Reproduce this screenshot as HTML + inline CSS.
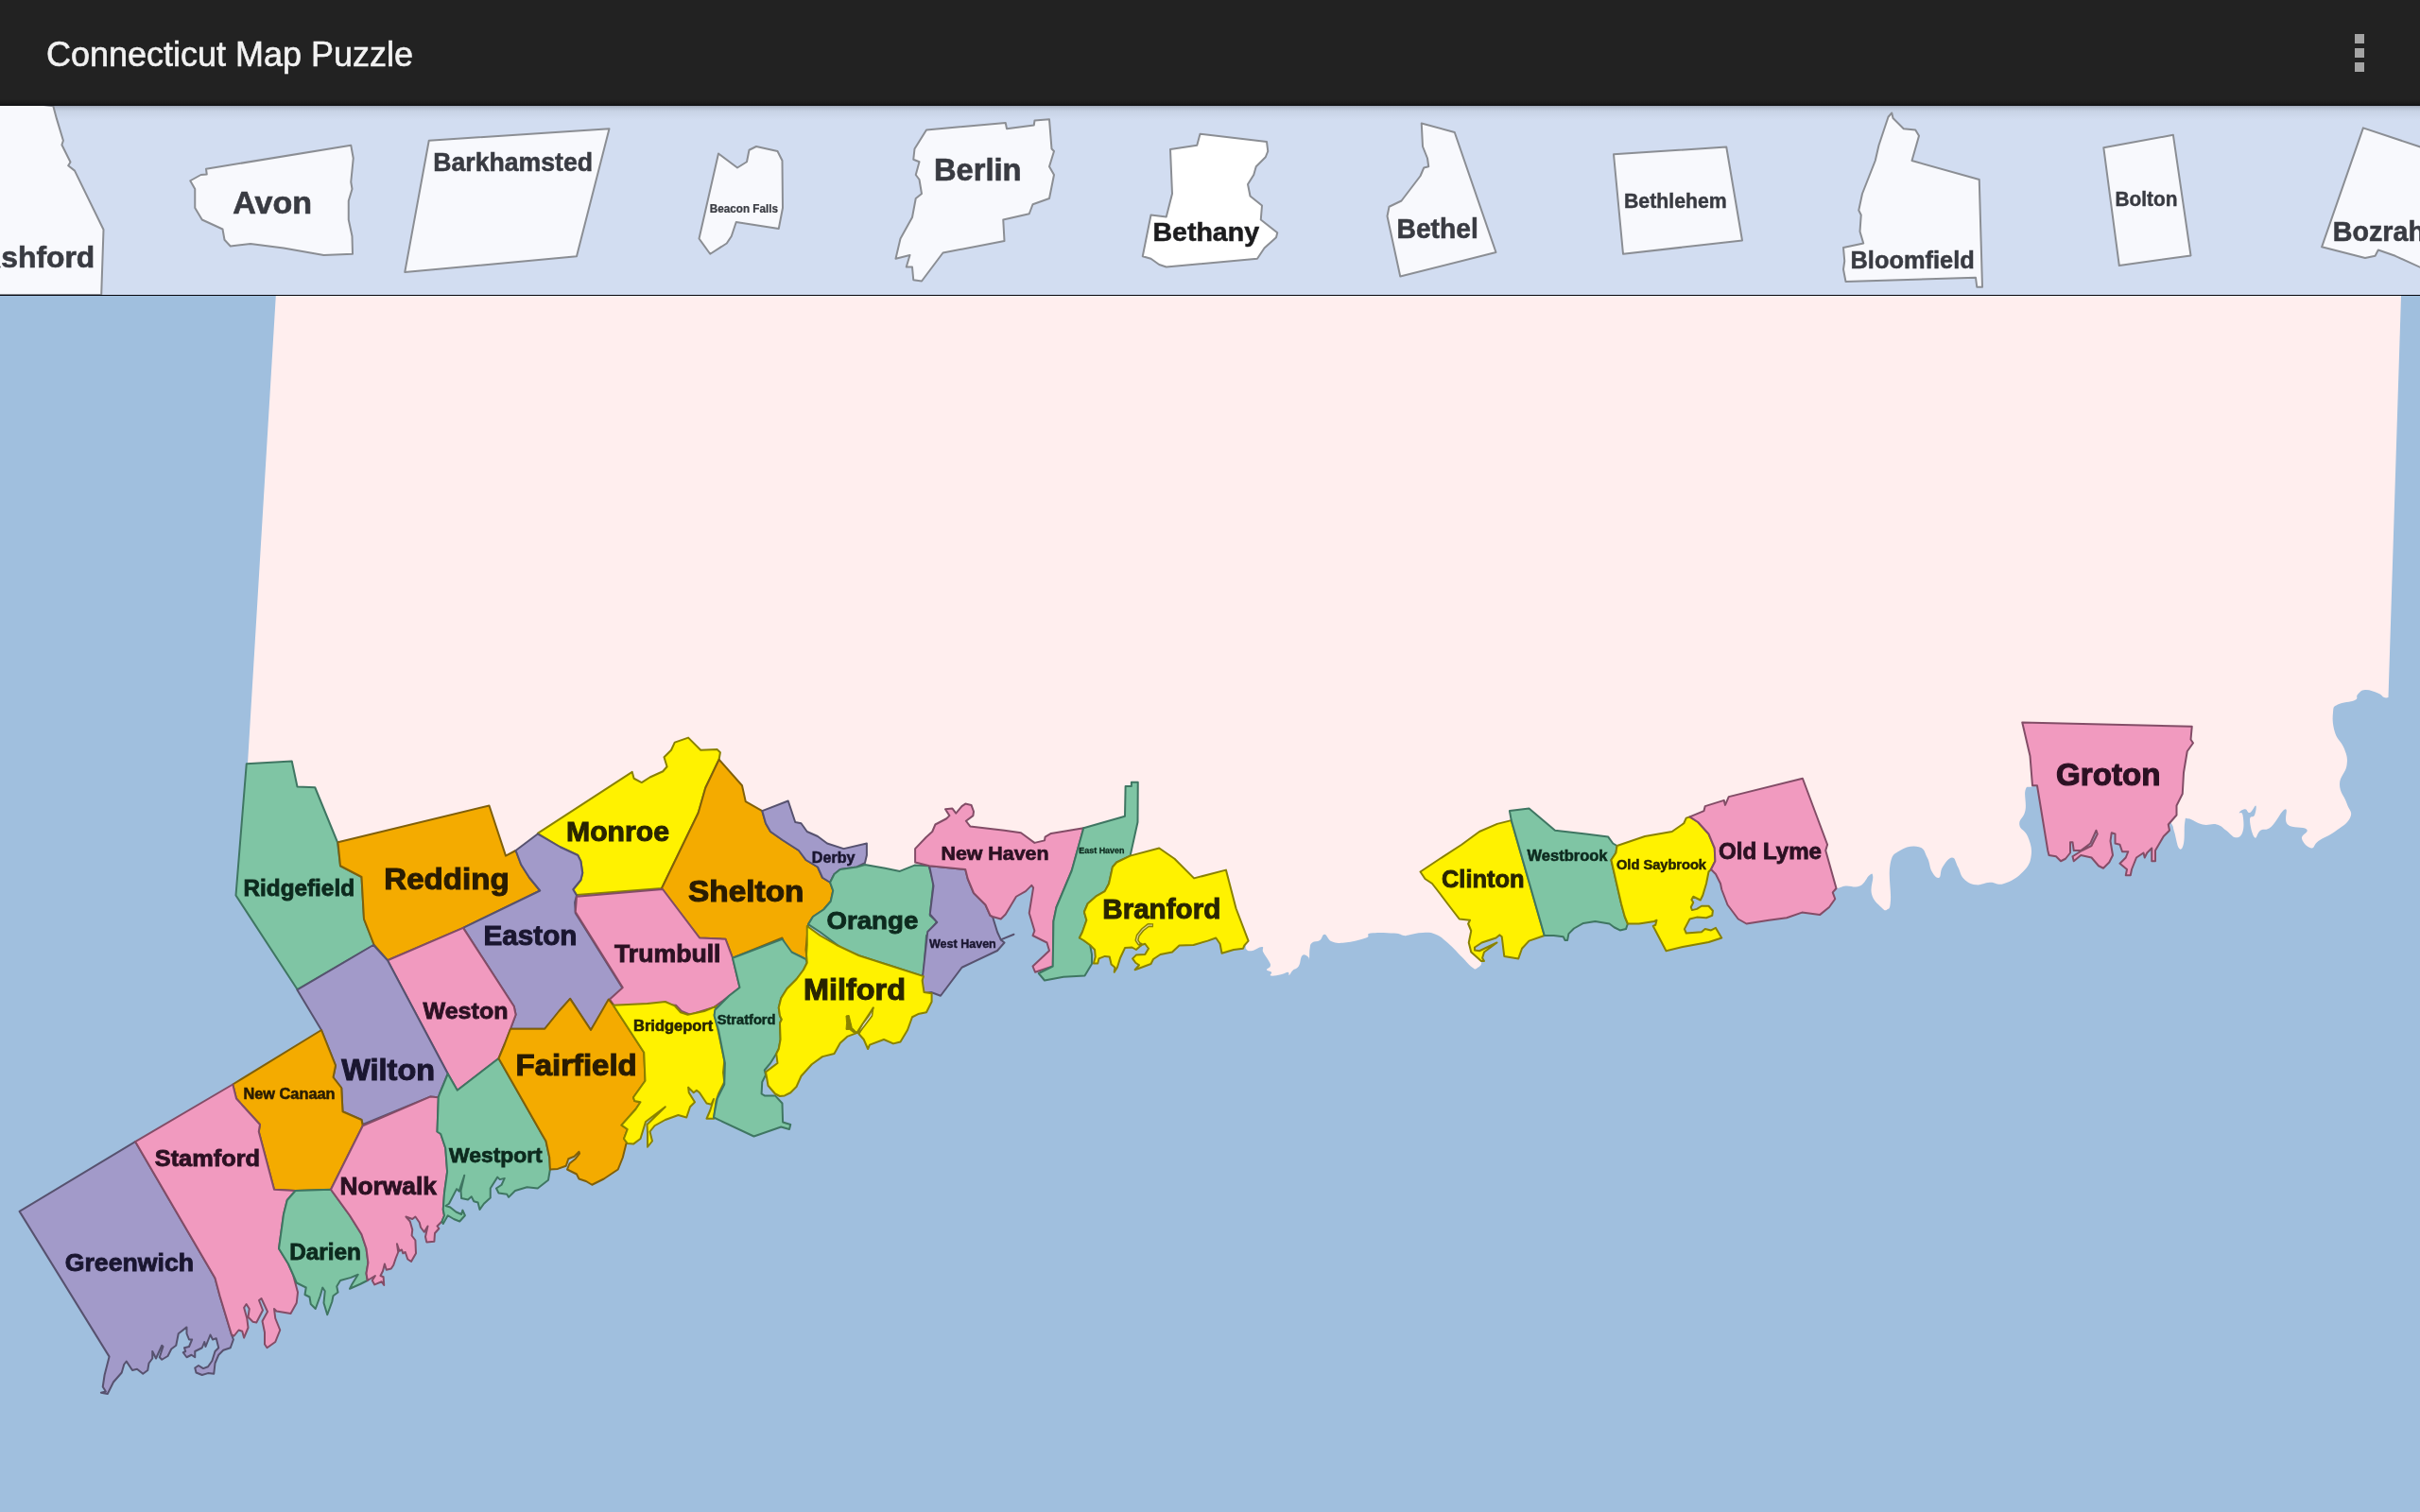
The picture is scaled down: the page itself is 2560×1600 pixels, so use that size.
<!DOCTYPE html>
<html><head><meta charset="utf-8"><title>Connecticut Map Puzzle</title>
<style>
html,body{margin:0;padding:0;background:#a0bfde;}
body{width:2560px;height:1600px;overflow:hidden;position:relative;font-family:"Liberation Sans",sans-serif;}
svg{position:absolute;left:0;top:0;display:block;will-change:transform;transform:translateZ(0)}
text{font-family:"Liberation Sans",sans-serif;}
.t{stroke-width:2;stroke-linejoin:round}
.p{fill:#f8f9fd;stroke:#8b8e94;stroke-width:2;stroke-linejoin:round}
.l{font-weight:bold}
.pl{font-weight:bold;fill:#393b42;stroke:#393b42}
</style></head><body>
<svg width="2560" height="1600" viewBox="0 0 2560 1600">
<defs>
<linearGradient id="sh" x1="0" y1="0" x2="0" y2="1"><stop offset="0" stop-color="#9fa7b7"/><stop offset=".12" stop-color="#b6c0d2"/><stop offset=".25" stop-color="#bfcadc"/><stop offset=".4" stop-color="#c9d4e6"/><stop offset="1" stop-color="#d2ddf1"/></linearGradient>
<linearGradient id="bb" x1="0" y1="0" x2="0" y2="1"><stop offset="0" stop-color="#222222"/><stop offset=".6" stop-color="#1b1b1b"/><stop offset="1" stop-color="#0f1013"/></linearGradient>
</defs>
<rect x="0" y="0" width="2560" height="1600" fill="#a0bfde"/>
<path d="M291.8,313 L2540,313 L2526.5,738 C2525.5,738.0 2524.4,739.0 2522,738 C2519.6,737.0 2520.0,735.3 2515.6,733.5 C2511.2,731.7 2506.8,729.7 2502,730 C2497.2,730.3 2496.4,732.6 2494,735 C2491.6,737.4 2495.6,738.7 2491,741 C2486.4,743.3 2478.1,742.7 2473,745.6 C2467.9,748.5 2468.7,747.5 2468,754 C2467.3,760.5 2467.4,766.5 2470,775 C2472.6,783.5 2477.2,784.8 2480,792.5 C2482.8,800.2 2483.6,801.8 2482.5,810 C2481.4,818.2 2475.0,821.2 2475,830 C2475.0,838.8 2480.0,842.3 2482.5,850 C2485.0,857.7 2489.0,858.4 2486.25,865 C2483.5,871.6 2477.4,874.5 2470,880 C2462.6,885.5 2458.0,886.1 2452.5,890 C2447.0,893.9 2448.8,898.0 2445,897.5 C2441.2,897.0 2436.1,891.9 2435,887.5 C2433.9,883.1 2443.3,880.8 2440,877.5 C2436.7,874.2 2424.9,877.2 2420,872.5 C2415.1,867.8 2421.3,855.7 2417.5,856.25 C2413.7,856.8 2408.3,870.0 2402.5,875 C2396.7,880.0 2395.1,876.3 2391.25,878.75 C2387.4,881.2 2387.5,888.7 2385,886.25 C2382.5,883.8 2380.0,872.7 2380,867.5 C2380.0,862.3 2383.6,865.8 2385,862.5 C2386.4,859.2 2387.3,853.0 2386.25,852.5 C2385.2,852.0 2382.5,859.2 2380,860 C2377.5,860.8 2377.5,856.2 2375,856.25 C2372.5,856.2 2369.3,858.6 2368.75,860 C2368.2,861.4 2371.7,858.1 2372.5,862.5 C2373.3,866.9 2374.2,874.8 2372.5,880 C2370.8,885.2 2368.8,886.5 2365,886.25 C2361.2,886.0 2359.4,881.8 2355,878.75 C2350.6,875.7 2350.5,873.9 2345,872.5 C2339.5,871.1 2336.6,873.9 2330,872.5 C2323.4,871.1 2319.1,866.8 2315,866.25 C2310.9,865.7 2312.3,864.2 2311.25,870 C2310.2,875.8 2311.4,886.5 2310,892.5 C2308.6,898.5 2307.2,900.2 2305,897.5 C2302.8,894.8 2302.0,886.0 2300,880 C2298.0,874.0 2300.4,876.6 2296,870 C2291.6,863.4 2307.7,854.4 2280,850 C2252.3,845.6 2196.4,854.0 2170,850 C2143.6,846.0 2164.7,835.9 2160,832 C2155.3,828.1 2152.6,831.6 2148.75,832.5 C2144.9,833.4 2143.9,830.8 2142.5,836.25 C2141.1,841.8 2143.9,849.5 2142.5,857.5 C2141.1,865.5 2135.7,866.5 2136.25,872.5 C2136.8,878.5 2142.2,877.9 2145,885 C2147.8,892.1 2149.8,896.8 2148.75,905 C2147.7,913.2 2146.3,915.9 2140,922.5 C2133.7,929.1 2127.7,932.5 2120,935 C2112.3,937.5 2111.6,933.5 2105,933.75 C2098.4,934.0 2096.1,937.1 2090,936.25 C2083.9,935.4 2081.6,934.1 2077.5,930 C2073.4,925.9 2074.0,922.5 2071.25,917.5 C2068.5,912.5 2068.6,907.5 2065,907.5 C2061.4,907.5 2058.0,912.8 2055,917.5 C2052.0,922.2 2053.7,927.6 2051.25,928.75 C2048.8,929.9 2046.5,927.2 2043.75,922.5 C2041.0,917.8 2041.8,913.3 2038.75,907.5 C2035.7,901.7 2036.3,897.9 2030,896.25 C2023.7,894.6 2016.7,895.9 2010,900 C2003.3,904.1 2001.7,903.5 1999.5,915 C1997.3,926.5 2000.7,942.0 2000,952.5 C1999.3,963.0 1998.5,960.9 1996.25,962.5 C1994.0,964.1 1993.6,963.6 1990,960 C1986.4,956.4 1981.9,953.4 1980,946.25 C1978.1,939.1 1981.8,931.9 1981.25,927.5 C1980.7,923.1 1980.5,924.0 1977.5,926.25 C1974.5,928.5 1973.0,935.0 1967.5,937.5 C1962.0,940.0 1958.0,937.0 1952.5,937.5 C1947.0,938.0 1948.5,939.5 1942.5,940 C1936.5,940.5 1949.8,948.8 1925,940 C1900.2,931.2 1859.7,911.0 1830,900 C1800.3,889.0 1814.2,890.0 1790,890 C1765.8,890.0 1753.0,897.8 1720,900 C1687.0,902.2 1675.2,891.2 1640,900 C1604.8,908.8 1578.5,921.3 1560,940 C1541.5,958.7 1556.5,970.4 1556,985 C1555.5,999.6 1555.1,999.1 1557.5,1006.25 C1559.9,1013.4 1565.8,1013.5 1566.9,1017.5 C1568.0,1021.5 1564.6,1023.0 1562.5,1024.4 C1560.4,1025.8 1561.1,1026.4 1557.5,1023.75 C1553.9,1021.1 1552.0,1018.3 1546.25,1012.5 C1540.5,1006.7 1537.3,1002.7 1531.25,997.5 C1525.2,992.3 1524.5,991.1 1518.75,988.75 C1513.0,986.4 1511.3,986.8 1505,986.9 C1498.7,987.0 1494.4,988.7 1490,989.4 C1485.6,990.1 1488.3,990.4 1485,990 C1481.7,989.6 1482.7,988.0 1475,987.5 C1467.3,987.0 1456.6,986.4 1450,987.5 C1443.4,988.6 1451.0,990.3 1445,992.5 C1439.0,994.7 1430.5,996.7 1422.5,997.5 C1414.5,998.3 1413.4,998.2 1408.75,996.25 C1404.1,994.3 1404.0,989.0 1401.25,988.75 C1398.5,988.5 1399.1,993.1 1396.25,995 C1393.4,996.9 1390.4,995.6 1388.1,997.5 C1385.8,999.4 1386.3,999.9 1385.6,1003.75 C1384.9,1007.6 1385.4,1013.1 1385,1015 C1384.6,1016.9 1385.4,1013.3 1383.75,1012.5 C1382.1,1011.7 1379.7,1009.0 1377.5,1011.25 C1375.3,1013.5 1376.0,1019.1 1373.75,1022.5 C1371.5,1025.9 1369.7,1024.8 1367.5,1026.9 C1365.3,1029.0 1364.8,1031.5 1363.75,1031.9 C1362.7,1032.3 1364.4,1028.9 1362.5,1028.75 C1360.6,1028.6 1359.0,1030.4 1355,1031.25 C1351.0,1032.1 1346.6,1033.0 1344.4,1032.5 C1342.2,1032.0 1346.0,1030.1 1345,1028.75 C1344.0,1027.4 1340.3,1027.6 1340,1026.25 C1339.7,1024.9 1343.2,1024.4 1343.75,1022.5 C1344.3,1020.6 1344.2,1020.8 1342.5,1017.5 C1340.8,1014.2 1337.9,1010.9 1336.25,1007.5 C1334.6,1004.1 1337.8,1002.2 1335,1001.9 C1332.2,1001.6 1327.5,1005.8 1323.75,1006.25 C1320.0,1006.7 1319.7,1005.8 1318,1004 C1316.3,1002.2 1320.0,1003.3 1316,998 C1312.0,992.7 1325.5,988.4 1300,980 C1274.5,971.6 1228.6,971.0 1200,960 C1171.4,949.0 1185.4,943.2 1170,930 C1154.6,916.8 1167.4,901.1 1130,900 C1092.6,898.9 1041.8,917.3 1000,925 C958.2,932.7 962.0,938.3 940,935 C918.0,931.7 926.4,922.1 900,910 C873.6,897.9 864.0,893.2 820,880 C776.0,866.8 748.4,845.6 700,850 C651.6,854.4 630.8,883.5 600,900 C569.2,916.5 582.0,919.5 560,925 C538.0,930.5 550.6,930.5 500,925 C449.4,919.5 382.4,925.7 330,900 C277.6,874.3 277.0,828.2 262,808 Z" fill="#ffeeee"/>
<polygon class="t" fill="#7fc5a4" stroke="#3f7662" points="260.75,808.25 308.75,805.5 314.5,832.5 333.25,833.25 357,891.25 360,916.25 382.5,928 385,972.5 395.75,1000 314.5,1047 249.5,947.5"/>
<polygon class="t" fill="#f4ab00" stroke="#80600a" points="357.5,891.25 517.5,852.5 535,905.6 545.6,900 551.25,915 560,928.75 571.25,942.5 490,981.9 410,1016.25 395.75,1000 385,972.5 382.5,928 360,916.25"/>
<polygon class="t" fill="#fff200" stroke="#8a8200" points="568.75,881.9 668.75,816.9 670.6,823.75 678.75,828.1 687.5,822.5 701.25,816.25 705.6,811.25 702.5,801.25 710,793.75 713.75,785.6 728.1,780.6 741.25,793.75 758.75,793.1 761.9,796.25 760.6,803.75 746.25,833.75 738.75,860 700,940 610,947 606.25,941.25 614.4,931.25 616.25,923.75 614.4,911.25 611.25,905 592.5,896.25"/>
<polygon class="t" fill="#f4ab00" stroke="#80600a" points="760.6,803.75 785,831.25 788.75,848.1 806.25,858.1 810,871.25 815,880 827.5,888.75 845,900 852.5,910 865,917.5 870,928.75 878.1,933.75 881.25,942.5 878.75,953.75 871.25,962.5 860,970 855,978.1 852.5,1005 853.75,1016.25 847.5,1012.5 835,1007.5 830,998.75 827.5,992.5 775,1013.75 767.5,993.75 740,992.5 700,940 738.75,860 746.25,833.75"/>
<polygon class="t" fill="#a29ac9" stroke="#57526f" points="806.25,858.1 833.75,847.5 841.25,870 847.5,871.25 853.75,880 865,885 875,892.5 892.5,898.1 916.9,892.5 916.9,905 915,913.1 906.25,917.5 888.75,920 882.5,925 878.1,933.75 870,928.75 865,917.5 852.5,910 845,900 827.5,888.75 815,880 810,871.25"/>
<polygon class="t" fill="#7fc5a4" stroke="#3f7662" points="878.1,933.75 882.5,925 888.75,920 906.25,917.5 915,915 936.25,918.75 951.9,921.9 967.5,915.6 982.5,916.25 987.5,933.75 985,956.25 983.75,968.75 991.25,975 980,990 976.9,1033.1 940,1021.25 908.75,1011.25 892.5,1005 867.5,986.25 855,978.1 860,970 871.25,962.5 878.75,953.75 881.25,942.5"/>
<polygon class="t" fill="#a29ac9" stroke="#57526f" points="983.1,916.25 1021.25,920 1023.75,930 1030,945 1042.5,957.5 1047.5,968.75 1050,970 1055,986.25 1058.75,994.4 1062.5,997.5 1055,1006 1017.5,1023.75 995,1053.75 985,1050 977.5,1051 975,1040 976.25,1031 981.25,986 991.25,976 983.75,967.5 987.5,937.5"/>
<polygon class="t" fill="#f19abf" stroke="#834d67" points="968.1,898.1 979.4,886.25 986.25,880 989.4,872.5 1001.25,866.25 1004.4,863.1 1000,856.25 1007.5,855.6 1011.25,860.6 1017.5,853.1 1021.25,850.6 1027.5,851.9 1030,858.75 1029.4,863.1 1021.9,868.75 1026.25,874.4 1062.5,878.75 1080,881.25 1094.4,891.9 1105,889.4 1105.6,885.6 1111.9,881.9 1146.25,876.25 1133.75,921.25 1117.5,960 1114.4,975 1113.75,1022.5 1095,1028.75 1092.5,1022.5 1110,1006 1107.5,997.5 1092.5,990 1094.4,985 1088.75,966.25 1093.1,939.4 1091.25,936.9 1085,943.1 1075,948.75 1063.75,967.5 1058.75,972.5 1050,970 1047.5,968.75 1042.5,957.5 1030,945 1023.75,930 1021.25,920 983.1,916.25 968.1,912.5"/>
<polygon class="t" fill="#7fc5a4" stroke="#3f7662" points="1146.25,876.25 1190,863.75 1190.6,831.9 1196.9,831.9 1196.9,827.75 1203.75,827.75 1203.5,870 1195.6,905.6 1181.25,912.5 1176.9,917.5 1173.1,935 1168.75,943.1 1160,948.1 1150.6,956.25 1146.9,965 1149.4,973.75 1145,986.25 1141.9,992.5 1146.25,995 1153.1,1000 1155,1010 1155,1020 1147.5,1032.5 1125,1033.75 1105,1037.5 1098.75,1030 1113.75,1022.5 1114.4,975 1117.5,960 1133.75,921.25"/>
<polygon class="t" fill="#fff200" stroke="#8a8200" points="1195.6,905.6 1226.25,897.5 1242.5,908.75 1263.1,929.4 1296.9,920.6 1307.5,961.25 1320.6,995.6 1316.25,1000.6 1315,1003.75 1305,1005 1292.5,1008.75 1290.6,998.75 1286.25,992.5 1277.5,995.6 1262.5,1000 1247.5,1000.6 1240,1007.5 1227.5,1010 1220,1015 1217.5,1020 1207.5,1023.75 1200.6,1026.25 1205,1021.25 1201.25,1018.75 1198.1,1014.4 1201.9,1010.6 1211.25,1010 1215,1003.75 1211.25,998.75 1207.5,1000 1201.9,1005 1197.5,1002.5 1190,1003.1 1185,1013.75 1181.9,1023.75 1178.75,1028.75 1179.4,1023.75 1175.6,1020.6 1173.75,1012.5 1168.75,1011.9 1162.5,1014.4 1161.25,1019.4 1156.9,1019.4 1158.75,1012.5 1158.1,1005 1153.1,1000 1146.25,995 1141.9,992.5 1145,986.25 1149.4,973.75 1146.9,965 1150.6,956.25 1160,948.1 1168.75,943.1 1173.1,935 1176.9,917.5 1181.25,912.5"/>
<polygon class="t" fill="#fff200" stroke="#8a8200" points="1502.5,922.5 1521.25,910 1546.25,893.75 1565,880 1583.75,871.9 1598.75,868.1 1633.75,990 1617.5,995.6 1610,1003.75 1606.25,1014.4 1591.25,1011.9 1588.75,991.25 1586.25,989.4 1582.5,992.5 1567.5,997.5 1560,1002.5 1560,1005.6 1565,1006.25 1583.5,997.5 1570,1007.5 1568.1,1013.75 1570,1016.9 1566.9,1016.9 1556.25,1007.5 1553.75,997.5 1556.25,985 1553.1,977.5 1555,973.75 1543.75,972.5 1531.25,956.25 1523.75,946.25 1515,935 1507.5,930"/>
<polygon class="t" fill="#7fc5a4" stroke="#3f7662" points="1596.9,858.1 1617.5,855.6 1645,878.75 1677.5,882.5 1701.25,885.6 1706.25,892.5 1710.6,895 1709.4,902.5 1704.4,910 1715,956.25 1718.75,970 1721.9,977.5 1720,983.1 1713.75,984.4 1707.5,981.25 1702.5,977.5 1687.5,975 1675,976.9 1665,982.5 1659.4,988.1 1658.1,995 1655.6,995 1653.75,991.25 1643.75,990 1633.75,990 1598.75,868.1"/>
<polygon class="t" fill="#fff200" stroke="#8a8200" points="1710.6,895 1740,885 1768.75,880 1781.25,871.25 1783.75,865.6 1787.5,864.4 1796.25,870 1807.5,882.5 1813.75,897.5 1814.4,911.25 1810,920 1807.5,922.5 1805,935 1801.25,947.5 1798.75,952.5 1791.25,948.75 1789.4,951.9 1791.25,955 1788.75,960 1790,963.1 1795,961.9 1800,958.75 1807.5,958.75 1811.9,963.75 1811.25,968.75 1805,971.25 1795,970.6 1787.5,972.5 1781.9,983.1 1783.75,987.5 1800,986.25 1803.75,983.1 1810,984.4 1815,981.9 1821.25,992.5 1807.5,997 1780,1002 1762.5,1006.25 1748.75,980 1751.25,978.75 1752.5,973.75 1750,975 1733.75,977.5 1721.9,977.5 1718.75,970 1715,956.25 1704.4,910 1709.4,902.5"/>
<polygon class="t" fill="#f19abf" stroke="#834d67" points="1787.5,864.4 1802.5,858.1 1803.75,853.1 1823.75,846.9 1825,851.9 1828.75,843.1 1906.9,823.75 1933.1,893.75 1931.25,900 1942.5,940 1938.75,944.4 1941.25,951.25 1935,960 1925,968.1 1906.25,965.6 1890,971.25 1871.25,973.75 1847.5,977.5 1838.75,972.5 1827.5,957.5 1821.25,941.25 1820,935 1815,925 1810,920 1814.4,911.25 1813.75,897.5 1807.5,882.5 1796.25,870"/>
<polygon class="t" fill="#f19abf" stroke="#834d67" points="2139.25,764.5 2318.75,768.75 2317.5,782.5 2320,786.25 2313.75,795 2310,817.5 2308.75,840 2302.5,852.5 2302.5,862.5 2293.75,872.5 2295,878.75 2288.75,885 2280,900 2280,911.25 2276.25,911.25 2276.25,897.5 2271.25,902.5 2268.75,907.5 2267.5,902.5 2260,907.5 2255,920 2253.75,926.25 2248.75,926.25 2250,920 2242.5,913.75 2248.75,907.5 2251.25,901.25 2245,901.25 2242.5,893.75 2237.5,892.5 2237.5,882.5 2233.75,881.25 2232.5,890 2235,905 2231.25,912.5 2225,918.75 2220,916.25 2212.5,907.5 2201.25,905 2193.75,911.25 2192.5,906.25 2202.5,900 2212.5,895 2218.75,882.5 2217.5,878.75 2211.25,892.5 2201.25,900 2193.75,900 2192.5,891.25 2190,891.25 2190,902.5 2185,908.75 2180,911.25 2175,906.25 2167.5,905 2166.25,900 2155,831.25 2150,831.25 2147.5,800"/>
<polygon class="t" fill="#a29ac9" stroke="#57526f" points="545.6,900 568.75,882.5 592.5,896.25 611.25,905 614.4,911.25 616.25,923.75 614.4,931.25 606.25,941.25 610,947.5 608.1,955 608.75,966.25 658.75,1046 645,1057.5 625,1090 603.1,1056.9 576.25,1088.75 540,1088.75 545.6,1073.75 543.75,1065 490,981.9 571.25,942.5 560,928.75 551.25,915"/>
<polygon class="t" fill="#f19abf" stroke="#834d67" points="610,948.75 701,941 740,992.5 767.5,993.75 775,1013.75 782.5,1045 765,1058.75 755,1066 730,1073.75 721,1070 715,1063.75 687.5,1062.5 651,1066 645,1057.5 658.75,1045 608.75,965"/>
<polygon class="t" fill="#f19abf" stroke="#834d67" points="410,1016.25 490,981.9 543.75,1065 545.6,1073.75 540,1088.75 533.75,1105 527.5,1120 483.75,1153.75 473.75,1136.25"/>
<polygon class="t" fill="#a29ac9" stroke="#57526f" points="314.4,1047.5 395,1000 410,1016.25 473.75,1136.25 465,1157.5 463.75,1161.25 455,1160.6 383.75,1190 382.5,1185 362.5,1176.25 361.25,1151.25 352.5,1140 355,1127.5 340,1090"/>
<polygon class="t" fill="#f4ab00" stroke="#80600a" points="246.25,1147.5 340,1090 355,1127.5 352.5,1140 361.25,1151.25 362.5,1176.25 382.5,1185 383.75,1191.25 350,1258.75 312.5,1260 290,1258.75 273.75,1197.5 275,1190 250,1162.5"/>
<polygon class="t" fill="#a29ac9" stroke="#57526f" points="20.6,1281.9 143.1,1208.1 227.5,1352.5 232.5,1371.25 245,1412.5 246.9,1417.5 243.75,1426.25 236.25,1428.75 231.25,1433.75 227.5,1442.5 226.25,1453.75 220,1453.1 213.75,1455 207.5,1452.5 206.25,1447.5 210,1445 215,1448.1 220,1446.25 224.4,1440 227.5,1430 231.25,1426.25 228.75,1416.25 225,1417.5 222.5,1412.5 217.5,1425 216.25,1420 213.75,1426.25 206.25,1430 206.25,1436.25 202.5,1433.75 197.5,1436.25 193.75,1431.25 196.25,1430 195,1426.25 200,1425 203.1,1417.5 200,1417.5 197.5,1411.25 197.5,1404.4 188.75,1411.25 186.25,1423.75 181.25,1427.5 177.5,1435 171.25,1438.75 168.75,1436.25 172.5,1425 171.25,1423.75 165,1437.5 161.25,1430 161.25,1437.5 157.5,1442.5 156.25,1450 151.25,1453.75 145,1448.75 140,1450 133.75,1440.6 131.25,1443.75 128.75,1452.5 120,1462.5 113.75,1475 106.9,1473.75 111.9,1472.5 108.75,1467.5 110.6,1455 115.6,1435.6"/>
<polygon class="t" fill="#f19abf" stroke="#834d67" points="143.1,1208.1 246.25,1147.5 250,1162.5 275,1190 273.75,1197.5 290,1258.75 312.5,1260 303.75,1270 300,1285 295,1321.25 305,1337.5 310,1348.75 315,1367.5 313.75,1378.75 307.5,1390 292.5,1387.5 290,1385 291.25,1395 296.25,1407.5 291.25,1420 282.5,1426.25 280,1422.5 280,1410 277.5,1398 283,1388 276.5,1374 274,1376 278,1386.5 271.25,1399.5 267.5,1398.75 262.5,1393.75 263.75,1385 260.6,1380 258.1,1383.75 261.25,1395 262.5,1405 258.1,1415.6 256.25,1408.75 252.5,1407.5 247.5,1413.75 245,1412.5 232.5,1371.25 227.5,1352.5"/>
<polygon class="t" fill="#7fc5a4" stroke="#3f7662" points="312.5,1260 350,1258.75 370,1286.25 382.5,1306.25 387.5,1321.25 389.4,1336.25 387.5,1347.5 388.75,1355 381.25,1358.75 370,1363.75 372.5,1358.75 378.75,1348.75 371.25,1351.9 360,1355 356.25,1361.25 357.5,1367.5 352.5,1371.25 351.25,1377.5 346.25,1391.25 342.5,1378.75 343.75,1366.25 341.25,1362.5 338.75,1371.25 333.75,1385 328.75,1380 327.5,1372.5 322.5,1370 323.75,1362.5 313.75,1357.5 310,1348.75 305,1337.5 295,1321.25 300,1285 303.75,1270"/>
<polygon class="t" fill="#f19abf" stroke="#834d67" points="383.75,1191.25 455,1160.6 463.75,1161.25 462.5,1197.5 466.25,1200 471.25,1215 473.1,1240 470,1262.5 468.75,1280 470,1286.25 467.5,1292.5 462.5,1297.5 464.4,1300 460,1305 459.4,1313.75 451.25,1314.4 450,1308.75 452.5,1297.5 448.75,1303.75 445,1298.75 443.75,1293.75 439.4,1287.5 436.25,1290 429.4,1287.5 433.75,1292.5 436.25,1301.25 435.6,1307.5 439.4,1312.5 440,1326.25 435,1335 431.25,1332.5 428.75,1325 426.25,1326.25 425,1322.5 422.5,1323.75 420,1316.25 421.25,1325 418.75,1331.25 416.25,1338.75 413.75,1342.5 408.75,1343.75 406.9,1337.5 405,1345 402.5,1350 405.6,1351.25 406.25,1360 403.75,1356.25 396.25,1359.4 393.75,1355 396.9,1350 388.75,1355 387.5,1347.5 389.4,1336.25 387.5,1321.25 382.5,1306.25 370,1286.25 350,1258.75"/>
<polygon class="t" fill="#7fc5a4" stroke="#3f7662" points="473.75,1136.25 483.75,1153.75 527.5,1120 573.1,1200 577.5,1207.5 581.25,1225 581.9,1237.5 580,1248.75 568.75,1257.5 557.5,1256.25 545,1260 538.1,1266.9 536.25,1263.75 527.5,1262.5 525,1257.5 530.6,1253.75 533.75,1246.9 528.75,1248.1 526.25,1245.6 518.75,1257.5 518.75,1267.5 511.9,1273.75 507.5,1280 505.6,1272.5 501.25,1271.25 498.75,1266.25 495,1269.4 488.1,1268.1 487.5,1260 491.25,1243.75 485.6,1260.6 483.1,1258.1 475,1273.75 471.5,1276 476.25,1277.5 482.5,1282.5 488.1,1285 489.4,1280.6 491.9,1286.25 486.25,1292.5 480,1290 473.75,1286.25 468.75,1295 467.5,1292.5 470,1286.25 468.75,1280 470,1262.5 473.1,1240 471.25,1215 466.25,1200 462.5,1197.5 463.75,1161.25 465,1157.5"/>
<polygon class="t" fill="#f4ab00" stroke="#80600a" points="527.5,1120 533.75,1105 540,1088.75 576.25,1088.75 591.25,1070 603.1,1056.9 625,1090 643.75,1057.5 648.75,1063.75 681.25,1113.75 682.5,1143.75 670,1161.25 671.25,1165 677.5,1166.25 672.5,1173.75 657.5,1190.6 663.75,1195 660,1205 663.75,1210 662.5,1210 658.75,1225 653.75,1237.5 638.75,1247.5 626.25,1253.75 620,1250 612.5,1247.5 610,1242.5 600,1237.5 602.5,1231.25 608.75,1226.25 613.1,1220.6 612.5,1218.75 607.5,1223.75 601.25,1226.25 598.75,1233.75 590,1236.9 581.9,1237.5 581.25,1225 577.5,1207.5 573.1,1200"/>
<polygon class="t" fill="#fff200" stroke="#8a8200" points="648.75,1063.75 685,1061.9 703.75,1060 713.75,1064.4 720,1071.25 727.5,1073.75 745,1070 758.75,1064.4 755.6,1073.75 760,1092.5 766.25,1122.5 765,1135 766.25,1145 760,1157.5 757.5,1165 755,1183.75 747.5,1183.75 751.25,1175 755,1163 752.5,1168.75 747.5,1167.5 740,1156.25 736.9,1153.75 733.75,1156.25 728.1,1150.6 728.75,1156.25 735,1166.25 730,1171.25 726.25,1182.5 717.5,1180 703.75,1185 692.5,1191.25 687.5,1197.5 690,1207.5 685,1213.75 685,1198.75 684.5,1190 703.75,1171.25 683,1187 677.5,1205 670,1210.6 663.75,1210 660,1205 663.75,1195 657.5,1190.6 672.5,1173.75 677.5,1166.25 671.25,1165 670,1161.25 682.5,1143.75 681.25,1113.75"/>
<polygon class="t" fill="#7fc5a4" stroke="#3f7662" points="775,1013.75 827.5,993.75 837.5,1007.5 852.5,1015 853.75,1018.75 850,1026.25 842.5,1036.25 832.5,1046.25 826.25,1056.25 823.75,1066.25 825,1075 826.9,1078.75 825,1082.5 825.6,1100 823.75,1110 821.25,1115 815,1125 808.75,1132.5 810,1137.5 806.25,1145 805.6,1157.5 808.75,1159.4 820,1159.4 827.5,1167.5 828.1,1187.5 836.25,1190 835,1195 826.25,1192.5 797.5,1202.5 755,1182.5 756.25,1175 758.75,1162.5 766.25,1147.5 766.9,1125 760,1090 755.6,1075 756.25,1068.75 771.25,1053.75 782.5,1045"/>
<polygon class="t" fill="#fff200" stroke="#8a8200" points="853.75,980 867.5,990 885,1000 908.75,1011.25 940,1021.25 976.9,1033.1 975.6,1037.5 977.5,1050 985.6,1051.25 985.6,1060 980,1071.25 971.25,1073.1 965,1076.25 960,1090 952.5,1102.5 945,1104.4 935,1100 920,1105.6 918.1,1110 913.75,1100 908.5,1094 923.75,1066.5 906.25,1093.1 896.25,1096.9 888.75,1103.75 882.5,1115 870,1118.1 858.75,1126.25 847.5,1138.75 842.5,1150 836.25,1156.25 830,1159.4 825,1160 820,1157.5 812.5,1148.75 811.25,1141.25 810,1134.4 822.5,1125 821.25,1115 823.75,1110 825.6,1100 825,1082.5 826.9,1078.75 825,1075 823.75,1066.25 826.25,1056.25 832.5,1046.25 842.5,1036.25 850,1026.25 853.75,1018.75 853.1,1010 853.75,1000"/>
<polygon points="895,1075 898.1,1074.4 899.4,1080 901.25,1087.5 905,1091.25 907.5,1093.5 902.5,1092.5 898.75,1089.4 895,1089.4 895.6,1082.5" fill="#8a8200" stroke="#8a8200" stroke-width="1" stroke-linejoin="round"/>
<polygon points="923.75,1066.25 922.5,1075 915,1085 908.75,1093.1 907.5,1092.5 912.5,1083.75 920,1073.75" fill="#dfe4ee" stroke="#8a8200" stroke-width="1.6" stroke-linejoin="round"/>
<path d="M1220,979.2 L1215,978.9 L1208.75,983.75 L1203.75,990 L1202.5,995 L1205,998.75 L1208,1000" fill="none" stroke="#8a8200" stroke-width="4" stroke-linejoin="round" stroke-linecap="butt"/>
<path d="M1219,979.2 L1215,979 L1208.75,983.75 L1203.75,990 L1202.5,995 L1205,998.75" fill="none" stroke="#d9d08f" stroke-width="1.2" stroke-linejoin="round"/>
<path d="M1058.75,994.4 L1072.5,988.75" fill="none" stroke="#57526f" stroke-width="2" stroke-linecap="round"/>
<text class="l" fill="#0d2a1e" stroke="#0d2a1e" x="257.5" y="948" font-size="23.4" stroke-width="0.80" textLength="117.5" lengthAdjust="spacingAndGlyphs">Ridgefield</text>
<text class="l" fill="#2a1c02" stroke="#2a1c02" x="406.25" y="941.25" font-size="31.9" stroke-width="1.08" textLength="132.5" lengthAdjust="spacingAndGlyphs">Redding</text>
<text class="l" fill="#1a1630" stroke="#1a1630" x="511.5" y="1000" font-size="29.1" stroke-width="0.99" textLength="99" lengthAdjust="spacingAndGlyphs">Easton</text>
<text class="l" fill="#2c1123" stroke="#2c1123" x="447.5" y="1078" font-size="24.1" stroke-width="0.82" textLength="90" lengthAdjust="spacingAndGlyphs">Weston</text>
<text class="l" fill="#1a1630" stroke="#1a1630" x="361.25" y="1142.5" font-size="31.6" stroke-width="1.07" textLength="98.75" lengthAdjust="spacingAndGlyphs">Wilton</text>
<text class="l" fill="#2a1c02" stroke="#2a1c02" x="257.5" y="1162.5" font-size="16.4" stroke-width="0.56" textLength="97" lengthAdjust="spacingAndGlyphs">New Canaan</text>
<text class="l" fill="#2c1123" stroke="#2c1123" x="163.75" y="1234.25" font-size="24.4" stroke-width="0.83" textLength="111.25" lengthAdjust="spacingAndGlyphs">Stamford</text>
<text class="l" fill="#2c1123" stroke="#2c1123" x="359.5" y="1263.75" font-size="25.3" stroke-width="0.86" textLength="102.5" lengthAdjust="spacingAndGlyphs">Norwalk</text>
<text class="l" fill="#0d2a1e" stroke="#0d2a1e" x="475" y="1229.5" font-size="22" stroke-width="0.75" textLength="98.75" lengthAdjust="spacingAndGlyphs">Westport</text>
<text class="l" fill="#0d2a1e" stroke="#0d2a1e" x="306.25" y="1332.5" font-size="23.4" stroke-width="0.80" textLength="75.75" lengthAdjust="spacingAndGlyphs">Darien</text>
<text class="l" fill="#1a1630" stroke="#1a1630" x="68.75" y="1344.5" font-size="25.6" stroke-width="0.87" textLength="136.25" lengthAdjust="spacingAndGlyphs">Greenwich</text>
<text class="l" fill="#292500" stroke="#292500" x="599" y="889.5" font-size="29" stroke-width="0.99" textLength="109" lengthAdjust="spacingAndGlyphs">Monroe</text>
<text class="l" fill="#2a1c02" stroke="#2a1c02" x="728" y="953.75" font-size="32.1" stroke-width="1.09" textLength="122.5" lengthAdjust="spacingAndGlyphs">Shelton</text>
<text class="l" fill="#1a1630" stroke="#1a1630" x="858.75" y="912.5" font-size="16.4" stroke-width="0.56" textLength="45.75" lengthAdjust="spacingAndGlyphs">Derby</text>
<text class="l" fill="#2c1123" stroke="#2c1123" x="995.5" y="910" font-size="20.5" stroke-width="0.70" textLength="114" lengthAdjust="spacingAndGlyphs">New Haven</text>
<text class="l" fill="#0d2a1e" stroke="#0d2a1e" x="1141.25" y="903" font-size="8.8" stroke-width="0.30" textLength="48.25" lengthAdjust="spacingAndGlyphs">East Haven</text>
<text class="l" fill="#0d2a1e" stroke="#0d2a1e" x="874.5" y="983" font-size="26.6" stroke-width="0.90" textLength="96.75" lengthAdjust="spacingAndGlyphs">Orange</text>
<text class="l" fill="#1a1630" stroke="#1a1630" x="983" y="1002.5" font-size="12.4" stroke-width="0.42" textLength="70.75" lengthAdjust="spacingAndGlyphs">West Haven</text>
<text class="l" fill="#2c1123" stroke="#2c1123" x="650" y="1018.25" font-size="25.6" stroke-width="0.87" textLength="112.5" lengthAdjust="spacingAndGlyphs">Trumbull</text>
<text class="l" fill="#292500" stroke="#292500" x="850" y="1057.5" font-size="31.6" stroke-width="1.07" textLength="108" lengthAdjust="spacingAndGlyphs">Milford</text>
<text class="l" fill="#0d2a1e" stroke="#0d2a1e" x="758.75" y="1083.75" font-size="14.1" stroke-width="0.48" textLength="61.75" lengthAdjust="spacingAndGlyphs">Stratford</text>
<text class="l" fill="#292500" stroke="#292500" x="670" y="1091.25" font-size="15.9" stroke-width="0.54" textLength="84.25" lengthAdjust="spacingAndGlyphs">Bridgeport</text>
<text class="l" fill="#292500" stroke="#292500" x="1166.25" y="972" font-size="29.5" stroke-width="1.00" textLength="125" lengthAdjust="spacingAndGlyphs">Branford</text>
<text class="l" fill="#292500" stroke="#292500" x="1525" y="938.75" font-size="25.6" stroke-width="0.87" textLength="87.5" lengthAdjust="spacingAndGlyphs">Clinton</text>
<text class="l" fill="#0d2a1e" stroke="#0d2a1e" x="1615.5" y="910.5" font-size="17" stroke-width="0.58" textLength="85" lengthAdjust="spacingAndGlyphs">Westbrook</text>
<text class="l" fill="#292500" stroke="#292500" x="1710" y="919.5" font-size="14" stroke-width="0.48" textLength="95" lengthAdjust="spacingAndGlyphs">Old Saybrook</text>
<text class="l" fill="#2c1123" stroke="#2c1123" x="1818" y="908.75" font-size="24.4" stroke-width="0.83" textLength="109" lengthAdjust="spacingAndGlyphs">Old Lyme</text>
<text class="l" fill="#2c1123" stroke="#2c1123" x="2175" y="831.25" font-size="33.1" stroke-width="1.13" textLength="110.5" lengthAdjust="spacingAndGlyphs">Groton</text>
<text class="l" fill="#2a1c02" stroke="#2a1c02" x="545.5" y="1138.25" font-size="31.7" stroke-width="1.08" textLength="128.25" lengthAdjust="spacingAndGlyphs">Fairfield</text>
<rect x="0" y="112" width="2560" height="200" fill="#d2ddf1"/>
<rect x="0" y="112" width="2560" height="15" fill="url(#sh)"/>
<polygon class="p" points="-5,105 56.3,112.2 60,125.9 66.9,148.7 65.4,153.2 74.5,171.5 72.2,175.3 79,180.6 109.5,243 107.2,312 -5,312"/>
<polygon class="p" points="201.25,191.25 212.5,185 218.75,184.5 218,178.75 371.25,153.75 373.75,167.5 371.25,192.5 372.5,200 368.75,212.5 368.75,232.5 372.5,250 373,268.75 342.5,270 300,262.5 265,258 243.75,260.5 237.5,253.75 235.5,242.5 213.75,232.5 206.25,220 206.25,200"/>
<polygon class="p" points="453.75,148.75 644.5,136.25 610,271.25 428.25,288"/>
<polygon class="p" points="760,162.5 780,177.5 790,171.25 792.5,158.75 800,155 822.5,160 827.5,170 828,220 823.75,242 778.75,235 773.75,250 768.75,257.5 751.25,268.75 739.5,252.5"/>
<polygon class="p" points="980,137.5 1063.75,130 1065,136.25 1093.75,132.5 1094.5,127.5 1110,126.25 1112.5,157.5 1115,160 1110,176.25 1115,185 1110,210 1092.5,216.25 1088.75,226.25 1061.25,232.5 1062.5,255 997.5,267.5 975,297.5 966.25,296.25 965,282.5 958.75,282.5 962.5,270 947.5,273.75 952.5,252.5 965,230 968.75,210 975,205 972.5,190 968.75,185 972.5,171.25 966.25,168.75 967.5,157.5"/>
<polygon class="p" points="1238,158 1266.25,153.75 1269.5,141.75 1340,150 1341.25,160 1338.75,166.25 1328.75,176.25 1326.25,185 1320,195 1322.5,207.5 1335,217.5 1333.75,232.5 1351.25,246.25 1350,251.25 1337.5,262.5 1330,273.75 1233.75,282.5 1226.25,280 1217.5,273.75 1208.75,271.25 1217.5,227.5 1233.75,229.5 1240,205" style="fill:#ffffff"/>
<polygon class="p" points="1503.75,130.5 1538.75,140 1582.5,267 1481.25,292.5 1467.5,228.75 1469.5,218.75 1482.5,212.5 1502.5,186.25 1506.25,177.5 1511.25,176.25 1510,167.5 1505,155"/>
<polygon class="p" points="1707,163.25 1826.25,155.5 1843,254.5 1717,268.75"/>
<polygon class="p" points="2001.25,119.5 2002.5,125 2013.75,136.25 2026.25,137.5 2030,143.75 2022.5,170 2093.75,190 2097,303.75 2091.25,303.75 2090,293.75 1952.5,298 1950,285 1951.25,276.25 1950,262 1971.25,257.5 1967.5,245 1968.75,227.5 1966.25,222.5 1970,205 1983.75,170 1987.5,153.75 1997.5,123.75"/>
<polygon class="p" points="2225.3,156.2 2298.9,142.8 2317.5,270.4 2241.8,281"/>
<polygon class="p" points="2499.9,135.4 2565,157 2565,285 2533.8,270.8 2515.8,264.5 2512.6,270.8 2502,273 2456.1,261.3"/>
<text class="pl" x="-21.7" y="282.5" font-size="31.4" textLength="122" lengthAdjust="spacingAndGlyphs" stroke-width="0.63">Ashford</text>
<text class="pl" x="246.25" y="225.5" font-size="32.9" textLength="83.75" lengthAdjust="spacingAndGlyphs" stroke-width="0.66">Avon</text>
<text class="pl" x="458.25" y="180.75" font-size="27.3" textLength="168.75" lengthAdjust="spacingAndGlyphs" stroke-width="0.55">Barkhamsted</text>
<text class="pl" x="750.75" y="225" font-size="12.2" textLength="72.25" lengthAdjust="spacingAndGlyphs" stroke-width="0.24">Beacon Falls</text>
<text class="pl" x="988" y="191.25" font-size="33.5" textLength="92.5" lengthAdjust="spacingAndGlyphs" stroke-width="0.67">Berlin</text>
<text class="pl" x="1219.5" y="254.5" font-size="27.4" textLength="112.5" lengthAdjust="spacingAndGlyphs" style="fill:#1c1c1e;stroke:#1c1c1e" stroke-width="0.55">Bethany</text>
<text class="pl" x="1477.5" y="252" font-size="28.8" textLength="86.25" lengthAdjust="spacingAndGlyphs" stroke-width="0.58">Bethel</text>
<text class="pl" x="1718" y="219.5" font-size="21.6" textLength="108.75" lengthAdjust="spacingAndGlyphs" stroke-width="0.43">Bethlehem</text>
<text class="pl" x="1957.5" y="284.25" font-size="25.6" textLength="131.25" lengthAdjust="spacingAndGlyphs" stroke-width="0.51">Bloomfield</text>
<text class="pl" x="2237.5" y="217.5" font-size="21.6" textLength="66" lengthAdjust="spacingAndGlyphs" stroke-width="0.43">Bolton</text>
<text class="pl" x="2467.75" y="255" font-size="28.7" stroke-width="0.57">Bozrah</text>
<rect x="0" y="312" width="2560" height="1" fill="#05060c"/>
<rect x="0" y="0" width="2560" height="112" fill="#222222"/>
<rect x="0" y="105" width="2560" height="7" fill="url(#bb)"/>
<text x="49" y="70" font-size="36" fill="#f2f2f2" stroke="#f2f2f2" stroke-width="0.6" textLength="388" lengthAdjust="spacingAndGlyphs">Connecticut Map Puzzle</text>
<rect x="2491" y="36" width="10" height="10" fill="#a4a4a4"/>
<rect x="2491" y="51" width="10" height="10" fill="#a4a4a4"/>
<rect x="2491" y="66" width="10" height="10" fill="#a4a4a4"/>
</svg></body></html>
